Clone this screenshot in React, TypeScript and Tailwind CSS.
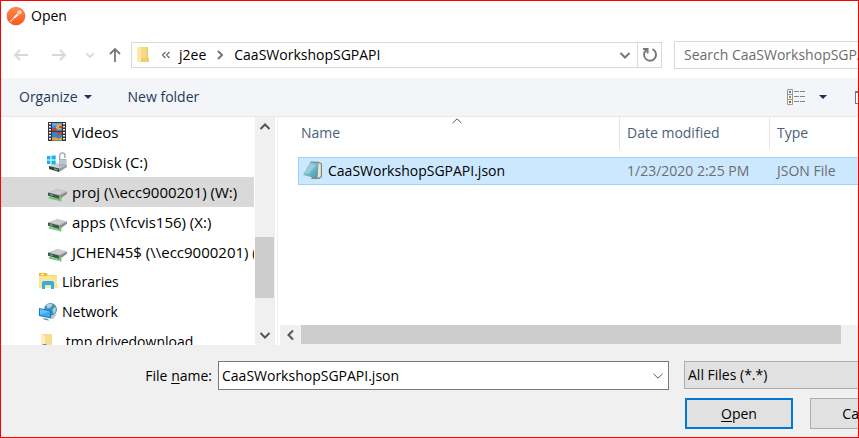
import React from "react";

function PostmanLogo() {
  return (
    <svg className="size-5 shrink-0" viewBox="0 0 20 20" aria-hidden="true">
      <defs>
        <linearGradient id="pm" x1="0" y1="0" x2="0" y2="1">
          <stop offset="0" stopColor="#ff8a4c" />
          <stop offset="1" stopColor="#f9571f" />
        </linearGradient>
      </defs>
      <circle cx="10" cy="10" r="9.3" fill="url(#pm)" />
      <path d="M4.6 15.4 11.2 8.6" stroke="#ffe6da" strokeWidth="1.1" strokeLinecap="round" />
      <path d="M7 11.6 11 7.4l1.800 1.700-3.600 3.200z" fill="#ffe6da" />
      <circle cx="13.500" cy="6.300" r="2.100" fill="#ffe6da" />
      <path d="m12.400 7.600 1.800-2" stroke="#f98a5a" strokeWidth=".7" />
    </svg>
  );
}

function Arrow({ kind }: { kind: "left" | "right" | "up" }) {
  const d = {
    left: "M15 8H1.500M7 3 2 8l5 5",
    right: "M1 8h13.500M9 3l5 5-5 5",
    up: "M8 15V1.500M3 7l5-5 5 5",
  }[kind];
  return (
    <svg className="size-4" viewBox="0 0 16 16" fill="none" stroke="currentColor" strokeWidth="1.800" aria-hidden="true">
      <path d={d} />
    </svg>
  );
}

function Chevron({ dir, className }: { dir: "up" | "down" | "left" | "right"; className?: string }) {
  const d = {
    up: "M1.500 8 6 3.500 10.500 8",
    down: "M1.500 4 6 8.500 10.500 4",
    left: "M8 1.500 3.500 6 8 10.500",
    right: "M4 2 8 6 4 10",
  }[dir];
  return (
    <svg className={className} viewBox="0 0 12 12" fill="none" stroke="currentColor" strokeWidth="2" aria-hidden="true">
      <path d={d} />
    </svg>
  );
}

function ThinChevron({ dir }: { dir: "up" | "down" }) {
  return (
    <svg className="h-1.5 w-2.5" viewBox="0 0 10 6" fill="none" stroke="#555" strokeWidth="1" aria-hidden="true">
      <path d={dir === "up" ? "M.5 5.200 5 .8 9.500 5.200" : "M.5 .8 5 5.200 9.500 .8"} />
    </svg>
  );
}

function Caret() {
  return (
    <svg className="h-1 w-2" viewBox="0 0 8 4" fill="#17335c" aria-hidden="true">
      <path d="M0 0h8L4 4z" />
    </svg>
  );
}

function FolderIcon() {
  return (
    <svg className="h-4 w-3" viewBox="0 0 12 16" aria-hidden="true">
      <path d="M2.500 0H11v10.500h1V15H2.500z" fill="#f0cd6b" />
      <path d="M2.500 0H9v11h-6z" fill="#f6da86" />
      <path d="m0 0 4 2v14l-4-1.500z" fill="#ffe9a8" />
    </svg>
  );
}

function VideosIcon() {
  return (
    <svg className="size-5" viewBox="0 0 20 20" aria-hidden="true">
      <path d="M1 0h18v19H1z" fill="#35353a" />
      <path d="M5 1h10v8H5z" fill="#3f86dc" />
      <path d="M5 10h10v8.500H5z" fill="#3b7ed2" />
      <path d="M5 1h10v2.500l-5 1-5-1z" fill="#5ba7ef" />
      <path d="M10 3c2-1.500 5-.5 5 2.500l-1.500 2h-3L9 5.500z" fill="#e8b62c" />
      <path d="M12 4h3v2h-3z" fill="#d6412b" />
      <path d="M5 6h4v3H5z" fill="#c0452f" />
      <path d="M10 10h5v2.500h-5z" fill="#cf3f2a" />
      <path d="M11 12.500h3l-1.500 2z" fill="#4e9a36" />
      <path d="M5 16c2-1 3-1 5 0s3 0 5-1v3.500H5z" fill="#dfa52f" />
      <path d="M3 1v18M17 1v18" stroke="#f4f4f4" strokeWidth="2" strokeDasharray="1.500 1.500" />
    </svg>
  );
}

function NetDriveIcon() {
  return (
    <svg className="size-5" viewBox="0 0 20 20" aria-hidden="true">
      <path d="m1 10.500 9.500-3.500L20 9.500l-7.500 4z" fill="#bdbdbd" />
      <path d="m3 10.400 7.500-2.700 7 1.900-5.500 2.900z" fill="#cfcfcf" />
      <path d="m1 10.500 11.500 3v3.700L1 13.700z" fill="#4c524f" />
      <path d="m12.500 13.500 7.500-4v2.200l-7.500 5.500z" fill="#8b8b8b" />
      <path d="m3 12.100 3 .8v1.200l-3-.8z" fill="#42d65b" />
      <path d="m2 15.700 10.500 2.500M13.500 15v4.500" stroke="#5fce6b" strokeWidth="1.800" />
    </svg>
  );
}

function OSDiskIcon() {
  return (
    <svg className="size-5" viewBox="0 0 20 20" aria-hidden="true">
      <path d="m2 14 9-3 9 2-8 4z" fill="#d0d0d0" />
      <path d="m2 14 10 2.500V20L2 17z" fill="#3b403d" />
      <path d="m12 16.500 8-3.500v2l-8 5z" fill="#999" />
      <path d="m7 16.200 3.500.9v1.300L7 17.500z" fill="#47d060" />
      <path d="M0 4h3.500v3.500H0zM4.500 3.500h4.200v4H4.500zM0 8.500h3.500V12H0zM4.500 8.500h4.200v4H4.500z" fill="#16b4ee" />
      <path d="M12.700 7V3.500a2.600 2.600 0 0 1 5.200 0V6" fill="none" stroke="#9aa4ab" strokeWidth="1.300" />
      <path d="M12 7h7.500v7L12 15z" fill="#a3b5c3" />
      <path d="M12.500 9H19M12.500 11H19" stroke="#d9e2e9" strokeWidth=".8" />
    </svg>
  );
}

function LibrariesIcon() {
  return (
    <svg className="size-5" viewBox="0 0 20 20" aria-hidden="true">
      <path d="M2 1h8l1 2h9v13H2z" fill="#f9d876" />
      <path d="M2 1h8v3H2z" fill="#edb93b" />
      <path d="M4 2h3v1H4z" fill="#fff" />
      <path d="M2 4h18v12H2z" fill="#ffe593" />
      <path d="M5 17v-6q0-2 2-2h8q2 0 2 2v6h-3v-4H8v4z" fill="#2fb0e8" />
    </svg>
  );
}

function NetworkIcon() {
  return (
    <svg className="size-5" viewBox="0 0 20 20" aria-hidden="true">
      <circle cx="13.500" cy="7.500" r="6.500" fill="#4e8fb0" />
      <path d="M9.500 3c2-2 6-1.500 6 0l-2 2.500-3 1zM15.500 7l3-2c1 3 .5 5-2 7z" fill="#a6d3e2" />
      <path d="m12 14.500 8-2.500-4 5-4-1z" fill="#b9c4cc" />
      <path d="m2 6 12 2.500v8L2 14z" fill="#1677c4" />
      <path d="m3 7.200 10 2.200v5.800L3 13.200z" fill="#38abf2" />
      <path d="m3 7.200 10 2.200-10 3z" fill="#64c4fa" />
      <path d="m7 16 4 1 1 1.800-6-1.500z" fill="#81909b" />
    </svg>
  );
}

function DriveFolderIcon() {
  return (
    <svg className="size-5" viewBox="0 0 20 20" aria-hidden="true">
      <path d="M5 2h10v11h1v5H5z" fill="#f7dc93" />
      <path d="m4 2 4 2v15l-4-2z" fill="#ffedbb" />
      <circle cx="7.500" cy="15" r="3" fill="#3d82d8" />
    </svg>
  );
}

function JsonFileIcon() {
  return (
    <svg className="size-5 shrink-0" viewBox="0 0 20 20" aria-hidden="true">
      <defs>
        <linearGradient id="nb" x1="0" y1="0" x2="1" y2="1">
          <stop offset="0" stopColor="#a9dbe4" />
          <stop offset="1" stopColor="#3f98b0" />
        </linearGradient>
      </defs>
      <path d="m16 1 3 1.500v13.500l-3 2H8z" fill="#8b8376" />
      <path d="m15.500 2 2.300 1v12.500L14.500 17z" fill="#ece7dc" />
      <path d="M7 1.500 15.500 1 14 17.500 0 14z" fill="url(#nb)" />
      <path d="m7.500 .5 8.500.2v1.300L7 1.800z" fill="#788e96" />
      <path d="m7.500 3.500 6 .2-8 9-3.500-.7z" fill="#c3e8ed" opacity=".4" />
    </svg>
  );
}

const drives = "pl-[46px] text-[15px]";
const roots = "pl-9 text-sm";

const tree = [
  { name: "Videos", icon: <VideosIcon />, style: drives },
  { name: "OSDisk (C:)", icon: <OSDiskIcon />, style: drives },
  { name: "proj (\\\\ecc9000201) (W:)", icon: <NetDriveIcon />, style: drives, selected: true },
  { name: "apps (\\\\fcvis156) (X:)", icon: <NetDriveIcon />, style: drives },
  { name: "JCHEN45$ (\\\\ecc9000201) (", icon: <NetDriveIcon />, style: drives },
  { name: "Libraries", icon: <LibrariesIcon />, style: roots },
  { name: "Network", icon: <NetworkIcon />, style: roots },
  { name: ".tmp.drivedownload", icon: <DriveFolderIcon />, style: roots },
];

function TitleBar() {
  return (
    <header className="flex h-[30px] items-center gap-[5px] pl-[5px]">
      <PostmanLogo />
      <h1>Open</h1>
    </header>
  );
}

function NavigationBar() {
  return (
    <div className="flex h-[47px] shrink-0 items-center">
      <div className="flex w-[130px] shrink-0 items-center pl-3 text-[#d8d8d8]">
        <button aria-label="Back"><Arrow kind="left" /></button>
        <button className="ml-[22px]" aria-label="Forward"><Arrow kind="right" /></button>
        <button className="ml-[18px]" aria-label="Recent locations"><Chevron dir="down" className="size-2.5" /></button>
        <button className="ml-3 text-[#777]" aria-label="Up"><Arrow kind="up" /></button>
      </div>
      <div className="flex h-[26px] min-w-0 flex-1 border border-[#d9d9d9]">
        <nav className="flex min-w-0 flex-1 items-center pl-[5px]" aria-label="Address">
          <FolderIcon />
          <svg className="ml-3 h-2 w-2.5" viewBox="0 0 10 8" fill="none" stroke="#666" strokeWidth="1.200" aria-hidden="true">
            <path d="M4.500 1 1.500 4l3 3M8.500 1l-3 3 3 3" />
          </svg>
          <a href="#j2ee" className="ml-2">j2ee</a>
          <Chevron dir="right" className="mx-2 size-3 text-[#777]" />
          <a href="#folder">CaaSWorkshopSGPAPI</a>
        </nav>
        <button className="grid w-6 place-items-center text-[#777]" aria-label="Previous locations">
          <Chevron dir="down" className="size-3" />
        </button>
        <button className="grid w-6 place-items-center border-l border-[#d9d9d9] text-[#777]" aria-label="Refresh">
          <svg className="size-4" viewBox="0 0 16 16" fill="none" stroke="currentColor" strokeWidth="1.900" aria-hidden="true">
            <path d="M10.500 2.200a6 6 0 1 1-6.200.8M1 2h4.600v4.600" />
          </svg>
        </button>
      </div>
      <input
        type="text"
        aria-label="Search CaaSWorkshopSGPAPI"
        placeholder="Search CaaSWorkshopSGPAPI"
        className="ml-3 h-7 w-[184px] shrink-0 border border-r-0 border-[#d9d9d9] pl-[9px] outline-none placeholder:text-[#6d6d6d]"
      />
    </div>
  );
}

function Toolbar() {
  return (
    <div className="flex h-[39px] shrink-0 items-center border-b border-[#e8e8e8] bg-[#f4f5f8] pl-[18px] text-[#1e395b]">
      <button className="flex items-center gap-1.5">Organize <Caret /></button>
      <button className="ml-9">New folder</button>
      <button className="ml-auto flex items-center gap-3.5" aria-label="Change your view">
        <svg className="h-4 w-[18px]" viewBox="0 0 18 16" fill="none" aria-hidden="true">
          <path d="M.5.5h5v15h-5zM.5 5.500h5M.5 10.500h5" stroke="#999" />
          <path d="M7 2.500h11M7 7.500h11M7 12.500h11" stroke="#808890" strokeDasharray="5 1" />
          <path d="M2 2h2v2H2z" fill="#3c8b93" />
          <path d="M2 7h2v2H2z" fill="#93952e" />
          <path d="M2 12h2v2H2z" fill="#d04b27" />
        </svg>
        <Caret />
      </button>
      <button className="ml-7 h-[13px] w-[3px] border border-t-2 border-r-0 border-[#777] bg-white" aria-label="Show the preview pane" />
    </div>
  );
}

function FolderTree() {
  return (
    <div className="flex w-[274px] shrink-0 overflow-hidden">
      <nav className="min-w-0 flex-1 overflow-hidden" aria-label="Folders">
        <ul>
          {tree.map((item) => (
            <li key={item.name} className={item.selected ? "bg-[#d9d9d9]" : ""}>
              <a href="#tree" className={`flex h-[30px] items-center gap-[5px] whitespace-nowrap ${item.style}`}>
                <span className="shrink-0">{item.icon}</span>
                {item.name}
              </a>
            </li>
          ))}
        </ul>
      </nav>
      <div className="ml-px flex w-5 flex-col bg-[#f0f0f0] text-[#555]">
        <button className="grid h-5 w-[19px] place-items-center" aria-label="Scroll up"><Chevron dir="up" className="size-3" /></button>
        <div className="flex-[100]" />
        <div className="mr-px h-[61px] bg-[#cdcdcd]" />
        <div className="flex-[27]" />
        <button className="grid h-5 w-[19px] place-items-center" aria-label="Scroll down"><Chevron dir="down" className="size-3" /></button>
      </div>
    </div>
  );
}

function FileList() {
  return (
    <div className="ml-0.5 flex min-w-0 flex-1 flex-col border-l border-[#f0f0f0]">
      <div className="flex-1 pl-5">
        <table className="w-full table-fixed border-separate border-spacing-0 text-left">
          <thead className="text-[#4c607a]">
            <tr>
              <th className="relative p-0 pb-2 font-normal">
                <div className="flex h-8 items-center border-r border-[#e5e5e5] pl-[3px]">Name</div>
                <span className="absolute inset-x-0 top-px flex justify-center pr-1"><ThinChevron dir="up" /></span>
              </th>
              <th className="w-[150px] p-0 pb-2 font-normal">
                <div className="flex h-8 items-center border-r border-[#e5e5e5] pl-[7px]">Date modified</div>
              </th>
              <th className="w-[88px] p-0 pb-2 font-normal">
                <div className="flex h-8 items-center pl-[7px]">Type</div>
              </th>
            </tr>
          </thead>
          <tbody>
            <tr className="bg-[#cce8ff] text-[#6d6d6d]">
              <td className="h-7 border-y border-l border-[#99d1ff] p-0 pl-1 text-black">
                <div className="flex items-center gap-[5px]"><JsonFileIcon />CaaSWorkshopSGPAPI.json</div>
              </td>
              <td className="border-y border-[#99d1ff] p-0 pl-[7px] whitespace-nowrap">1/23/2020 2:25 PM</td>
              <td className="border-y border-[#99d1ff] p-0 pl-[7px] whitespace-nowrap">JSON File</td>
            </tr>
          </tbody>
        </table>
      </div>
      <div className="ml-0.5 flex h-5 bg-[#f0f0f0] pb-px text-[#555]">
        <button className="grid w-[21px] place-items-center" aria-label="Scroll left"><Chevron dir="left" className="size-3" /></button>
        <div className="mr-[17px] flex-1 bg-[#cdcdcd]" />
      </div>
    </div>
  );
}

function Footer() {
  return (
    <footer className="flex shrink-0 bg-[#f0f0f0] pt-4 pb-2">
      <div className="flex h-[29px] min-w-0 flex-1 items-center">
        <label htmlFor="filename" className="w-[217px] shrink-0 pr-1.5 text-right">
          File <u className="underline-offset-2">n</u>ame:
        </label>
        <div className="flex h-full min-w-0 flex-1 items-center border border-[#7a7a7a] bg-white">
          <input id="filename" defaultValue="CaaSWorkshopSGPAPI.json" className="min-w-0 flex-1 pl-[3px] outline-none" />
          <button className="grid h-full w-5 place-items-center" aria-label="File name history"><ThinChevron dir="down" /></button>
        </div>
      </div>
      <div className="ml-[15px] w-[174px] shrink-0">
        <select aria-label="File type" className="block h-7 w-full appearance-none border border-r-0 border-[#adadad] bg-[#e1e1e1] pl-[3px]">
          <option>All Files (*.*)</option>
        </select>
        <div className="mt-[9px] ml-px flex gap-[17px]">
          <button className="h-[31px] w-[108px] shrink-0 border-2 border-[#0078d7] bg-[#e1e1e1]">
            <u className="underline-offset-2">O</u>pen
          </button>
          <button className="h-[31px] w-[108px] shrink-0 border border-[#adadad] bg-[#e1e1e1]">Cancel</button>
        </div>
      </div>
    </footer>
  );
}

export default function App() {
  return (
    <main className="flex h-screen flex-col overflow-hidden border border-[#ff0000] bg-white font-['Open_Sans','Noto_Sans',sans-serif] text-sm leading-5 text-black">
      <TitleBar />
      <NavigationBar />
      <Toolbar />
      <div className="flex min-h-0 flex-1">
        <FolderTree />
        <FileList />
      </div>
      <Footer />
    </main>
  );
}
